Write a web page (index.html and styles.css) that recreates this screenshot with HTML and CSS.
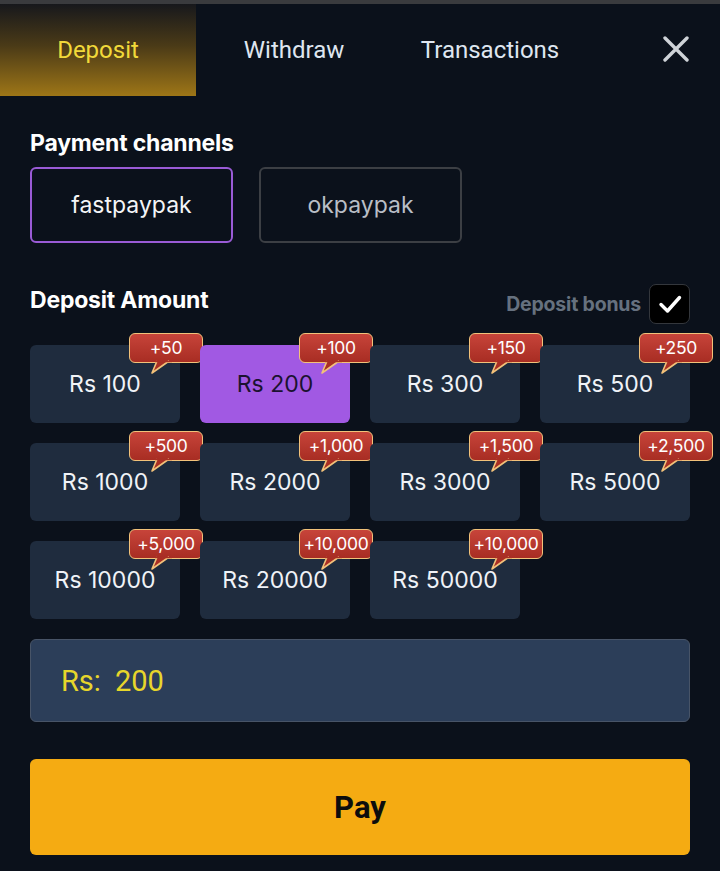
FILE: index.html
```html
<!DOCTYPE html>
<html lang="en">
<head>
<meta charset="utf-8">
<title>Deposit</title>
<link rel="stylesheet" href="styles.css">
</head>
<body>
<div class="topstrip"></div>
<nav class="tabs">
  <div class="tab tab-active">Deposit</div>
  <div class="tab">Withdraw</div>
  <div class="tab">Transactions</div>
  <div class="close">
    <svg width="26" height="26" viewBox="0 0 26 26"><path d="M2 2 L24 24 M24 2 L2 24" stroke="#cfd3d8" stroke-width="3.4" stroke-linecap="round"/></svg>
  </div>
</nav>
<main class="content">
  <h2 class="title">Payment channels</h2>
  <div class="channels">
    <div class="channel channel-active">fastpaypak</div>
    <div class="channel">okpaypak</div>
  </div>
  <div class="amount-head">
    <h2 class="title title-amount">Deposit Amount</h2>
    <div class="bonus">
      <span class="bonus-label">Deposit bonus</span>
      <span class="checkbox"><svg width="26" height="26" viewBox="0 0 26 26"><path d="M4 13.5 L10.5 20 L22.5 6.5" fill="none" stroke="#fff" stroke-width="3.4" stroke-linecap="round" stroke-linejoin="round"/></svg></span>
    </div>
  </div>
  <div class="grid">
    <div class="tile"><span>Rs 100</span><div class="badge">+50<svg class="tail" width="22" height="14" viewBox="0 0 22 14"><path d="M7 0 L2 12 L19 0" fill="#a92f24" stroke="#f2c27a" stroke-width="1.6" stroke-linejoin="round"/><rect x="5" y="0" width="17" height="1.2" fill="#a92f24"/></svg></div></div>
    <div class="tile tile-active"><span>Rs 200</span><div class="badge">+100<svg class="tail" width="22" height="14" viewBox="0 0 22 14"><path d="M7 0 L2 12 L19 0" fill="#a92f24" stroke="#f2c27a" stroke-width="1.6" stroke-linejoin="round"/><rect x="5" y="0" width="17" height="1.2" fill="#a92f24"/></svg></div></div>
    <div class="tile"><span>Rs 300</span><div class="badge">+150<svg class="tail" width="22" height="14" viewBox="0 0 22 14"><path d="M7 0 L2 12 L19 0" fill="#a92f24" stroke="#f2c27a" stroke-width="1.6" stroke-linejoin="round"/><rect x="5" y="0" width="17" height="1.2" fill="#a92f24"/></svg></div></div>
    <div class="tile"><span>Rs 500</span><div class="badge">+250<svg class="tail" width="22" height="14" viewBox="0 0 22 14"><path d="M7 0 L2 12 L19 0" fill="#a92f24" stroke="#f2c27a" stroke-width="1.6" stroke-linejoin="round"/><rect x="5" y="0" width="17" height="1.2" fill="#a92f24"/></svg></div></div>
    <div class="tile"><span>Rs 1000</span><div class="badge">+500<svg class="tail" width="22" height="14" viewBox="0 0 22 14"><path d="M7 0 L2 12 L19 0" fill="#a92f24" stroke="#f2c27a" stroke-width="1.6" stroke-linejoin="round"/><rect x="5" y="0" width="17" height="1.2" fill="#a92f24"/></svg></div></div>
    <div class="tile"><span>Rs 2000</span><div class="badge">+1,000<svg class="tail" width="22" height="14" viewBox="0 0 22 14"><path d="M7 0 L2 12 L19 0" fill="#a92f24" stroke="#f2c27a" stroke-width="1.6" stroke-linejoin="round"/><rect x="5" y="0" width="17" height="1.2" fill="#a92f24"/></svg></div></div>
    <div class="tile"><span>Rs 3000</span><div class="badge">+1,500<svg class="tail" width="22" height="14" viewBox="0 0 22 14"><path d="M7 0 L2 12 L19 0" fill="#a92f24" stroke="#f2c27a" stroke-width="1.6" stroke-linejoin="round"/><rect x="5" y="0" width="17" height="1.2" fill="#a92f24"/></svg></div></div>
    <div class="tile"><span>Rs 5000</span><div class="badge">+2,500<svg class="tail" width="22" height="14" viewBox="0 0 22 14"><path d="M7 0 L2 12 L19 0" fill="#a92f24" stroke="#f2c27a" stroke-width="1.6" stroke-linejoin="round"/><rect x="5" y="0" width="17" height="1.2" fill="#a92f24"/></svg></div></div>
    <div class="tile"><span>Rs 10000</span><div class="badge">+5,000<svg class="tail" width="22" height="14" viewBox="0 0 22 14"><path d="M7 0 L2 12 L19 0" fill="#a92f24" stroke="#f2c27a" stroke-width="1.6" stroke-linejoin="round"/><rect x="5" y="0" width="17" height="1.2" fill="#a92f24"/></svg></div></div>
    <div class="tile"><span>Rs 20000</span><div class="badge">+10,000<svg class="tail" width="22" height="14" viewBox="0 0 22 14"><path d="M7 0 L2 12 L19 0" fill="#a92f24" stroke="#f2c27a" stroke-width="1.6" stroke-linejoin="round"/><rect x="5" y="0" width="17" height="1.2" fill="#a92f24"/></svg></div></div>
    <div class="tile"><span>Rs 50000</span><div class="badge">+10,000<svg class="tail" width="22" height="14" viewBox="0 0 22 14"><path d="M7 0 L2 12 L19 0" fill="#a92f24" stroke="#f2c27a" stroke-width="1.6" stroke-linejoin="round"/><rect x="5" y="0" width="17" height="1.2" fill="#a92f24"/></svg></div></div>
  </div>
  <div class="amount-input"><span class="prefix">Rs:</span><span class="value">200</span></div>
  <button class="pay">Pay</button>
</main>
</body>
</html>
```
FILE: styles.css
```css
* { box-sizing: border-box; }
html, body { margin: 0; padding: 0; }
body {
  background: #0b111b;
  font-family: Inter, "Noto Sans", sans-serif;
  color: #f2f4f7;
  width: 720px;
  height: 871px;
  overflow: hidden;
}
.topstrip { height: 4px; background: #3a3b3e; }
.tabs {
  display: flex;
  align-items: stretch;
  height: 92px;
}
.tab {
  width: 196px;
  display: flex;
  align-items: center;
  justify-content: center;
  font-family: Roboto, sans-serif;
  font-size: 24px;
  color: #dfe6f0;
}
.tab-active {
  background: linear-gradient(180deg, #17181c 0%, #4a3a17 45%, #9e7617 100%);
  color: #f1d93a;
}
.close {
  flex: 1;
  display: flex;
  align-items: center;
  justify-content: flex-end;
  padding-right: 31px;
  padding-bottom: 2px;
}
.content { padding: 33px 30px 0; }
.title {
  margin: 0;
  font-size: 23px;
  font-weight: 700;
  line-height: 28px;
  color: #ffffff;
  letter-spacing: -0.2px;
}
.channels {
  display: flex;
  gap: 26px;
  margin-top: 10px;
}
.channel {
  width: 203px;
  height: 76px;
  border: 2px solid #3c3f44;
  border-radius: 6px;
  display: flex;
  align-items: center;
  justify-content: center;
  font-size: 23px;
  color: #b9bec6;
}
.channel-active {
  border-color: #9a5bd6;
  color: #f4f5f7;
}
.amount-head {
  margin-top: 41px;
  height: 40px;
  display: flex;
  align-items: center;
  justify-content: space-between;
}
.title-amount { padding-bottom: 8px; }
.bonus { display: flex; align-items: center; gap: 8px; }
.bonus-label {
  font-size: 19.5px;
  font-weight: 700;
  color: #66717f;
  letter-spacing: -0.2px;
}
.checkbox {
  width: 41px;
  height: 40px;
  border-radius: 7px;
  background: #000;
  border: 1.5px solid #34373c;
  display: flex;
  align-items: center;
  justify-content: center;
}
.grid {
  margin-top: 21px;
  display: grid;
  grid-template-columns: repeat(4, 150px);
  grid-auto-rows: 78px;
  gap: 20px;
}
.tile {
  position: relative;
  background: #1f2c3e;
  border-radius: 6px;
  display: flex;
  align-items: center;
  justify-content: center;
  font-size: 23px;
  color: #f0f3f7;
}
.tile-active { background: #a159e3; color: #1b1230; }
.badge {
  position: absolute;
  top: -12px;
  left: 99px;
  width: 74px;
  height: 30px;
  border-radius: 6px;
  border: 1.6px solid #f2c27a;
  background: linear-gradient(180deg, #c7443a 0%, #a82d23 100%);
  color: #fff;
  font-size: 17.5px;
  display: flex;
  align-items: center;
  justify-content: center;
  padding-bottom: 2px;
  letter-spacing: -0.3px;
  white-space: nowrap;
}
.tail {
  position: absolute;
  left: 20px;
  top: 27.2px;
  overflow: visible;
}
.amount-input {
  margin-top: 20px;
  height: 83px;
  background: #2c3e59;
  border: 1.5px solid #485467;
  border-radius: 6px;
  display: flex;
  align-items: center;
  padding-left: 30px;
  font-family: Roboto, sans-serif;
  font-size: 29px;
  color: #e7d62b;
  gap: 14px;
}
.pay {
  margin-top: 37px;
  width: 100%;
  height: 96px;
  border: 0;
  border-radius: 6px;
  background: #f5ab12;
  font-family: Roboto, sans-serif;
  font-weight: 700;
  font-size: 31px;
  color: #0d0d0d;
  display: block;
}
```
